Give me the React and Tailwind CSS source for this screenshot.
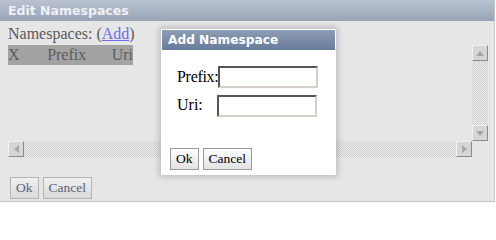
import React from "react";

const serif = "font-['Liberation_Serif',serif]";
const verdana = "font-['DejaVu_Sans',Verdana,sans-serif]";

function ScrollButton({ dir }) {
  return (
    <div className="w-[16px] h-[16px] shrink-0 bg-[#d6d6d6] border border-t-[#f2f2f2] border-l-[#f2f2f2] border-b-[#8a8a8a] border-r-[#8a8a8a] flex items-center justify-center">
      {dir === "up" && (
        <svg width="8" height="5" viewBox="0 0 8 5">
          <path d="M4 0 L8 5 L0 5 Z" fill="#a8a8a8" />
        </svg>
      )}
      {dir === "down" && (
        <svg width="8" height="5" viewBox="0 0 8 5">
          <path d="M0 0 L8 0 L4 5 Z" fill="#a8a8a8" />
        </svg>
      )}
      {dir === "left" && (
        <svg width="5" height="8" viewBox="0 0 5 8">
          <path d="M5 0 L5 8 L0 4 Z" fill="#a8a8a8" />
        </svg>
      )}
      {dir === "right" && (
        <svg width="5" height="8" viewBox="0 0 5 8">
          <path d="M0 0 L5 4 L0 8 Z" fill="#a8a8a8" />
        </svg>
      )}
    </div>
  );
}

const track =
  "bg-[image:repeating-conic-gradient(#cfcfcf_0_25%,#ececec_0_50%)] bg-[length:2px_2px]";

function OldButton({ children, dim }) {
  return (
    <button
      className={`h-[22px] px-[5px] border ${serif} text-[13.5px] leading-none ${
        dim
          ? "border-[#b4b4b4] bg-gradient-to-b from-[#f0f0f0] to-[#dadada] text-[#56607a]"
          : "border-[#9a9a9a] bg-gradient-to-b from-white to-[#e2e2e2] text-black"
      }`}
    >
      {children}
    </button>
  );
}

export default function App() {
  return (
    <div className="w-[496px] h-[205px] bg-white relative overflow-hidden">
      {/* EDIT NAMESPACES (dimmed) */}
      <div className="w-[495px] h-[202px] bg-[#e6e6e6] border-r border-b border-[#c4c4c4] flex flex-col">
        <div
          className={`h-[21px] shrink-0 bg-gradient-to-b from-[#bac2cf] to-[#98a4b7] pl-[8px] ${verdana} font-bold text-[12.5px] leading-[21px] text-[#eef1f5]`}
        >
          Edit Namespaces
        </div>

        <div className={`pl-[8px] pt-[4px] ${serif} text-[16px] leading-[18px] text-[#5a5a5a]`}>
          Namespaces: (<span className="text-[#6b6be6] underline">Add</span>)
        </div>

        {/* SCROLL AREA */}
        <div className="ml-[8px] mt-[2px] w-[480px] h-[112px] flex flex-col">
          <div className="flex flex-1">
            <div className="flex-1">
              <div className={`w-[125px] h-[20px] bg-[#a3a3a3] flex ${serif} text-[16px] leading-[20px] text-[#5c5c5c]`}>
                <span className="w-[40px]">X</span>
                <span className="w-[66px]">Prefix</span>
                <span>Uri</span>
              </div>
            </div>
            <div className="w-[16px] flex flex-col">
              <ScrollButton dir="up" />
              <div className={`flex-1 ${track}`} />
              <ScrollButton dir="down" />
            </div>
          </div>
          <div className="flex h-[16px]">
            <ScrollButton dir="left" />
            <div className={`flex-1 ${track}`} />
            <ScrollButton dir="right" />
            <div className="w-[16px]" />
          </div>
        </div>

        <div className="flex gap-[4px] ml-[10px] mt-[20px]">
          <OldButton dim>Ok</OldButton>
          <OldButton dim>Cancel</OldButton>
        </div>
      </div>

      {/* ADD NAMESPACE DIALOG */}
      <div className="absolute left-[161px] top-[29px] w-[175px] h-[146px] bg-white border border-white shadow-[0_0_6px_2px_rgba(0,0,0,0.18)] flex flex-col">
        <div
          className={`h-[20px] shrink-0 bg-gradient-to-b from-[#8e9db4] to-[#677b9c] pl-[6px] ${verdana} font-bold text-[12.2px] leading-[20px] text-white`}
        >
          Add Namespace
        </div>

        <div className={`flex flex-col gap-[6px] mt-[15px] pl-[15px] ${serif} text-[16px] text-black`}>
          <div className="flex items-center">
            <label className="min-w-[40px] shrink-0 whitespace-nowrap tracking-[-0.3px]">Prefix:</label>
            <input className="w-[100px] h-[22px] shrink-0 border-2 border-t-[#555] border-l-[#555] border-b-[#d4d0c8] border-r-[#d4d0c8] outline-none" />
          </div>
          <div className="flex items-center">
            <label className="w-[40px] shrink-0 -mt-[3px]">Uri:</label>
            <input className="w-[100px] h-[22px] shrink-0 border-2 border-t-[#555] border-l-[#555] border-b-[#d4d0c8] border-r-[#d4d0c8] outline-none" />
          </div>
        </div>

        <div className="flex gap-[4px] ml-[8px] mt-auto mb-[4px]">
          <OldButton>Ok</OldButton>
          <OldButton>Cancel</OldButton>
        </div>
      </div>
    </div>
  );
}
